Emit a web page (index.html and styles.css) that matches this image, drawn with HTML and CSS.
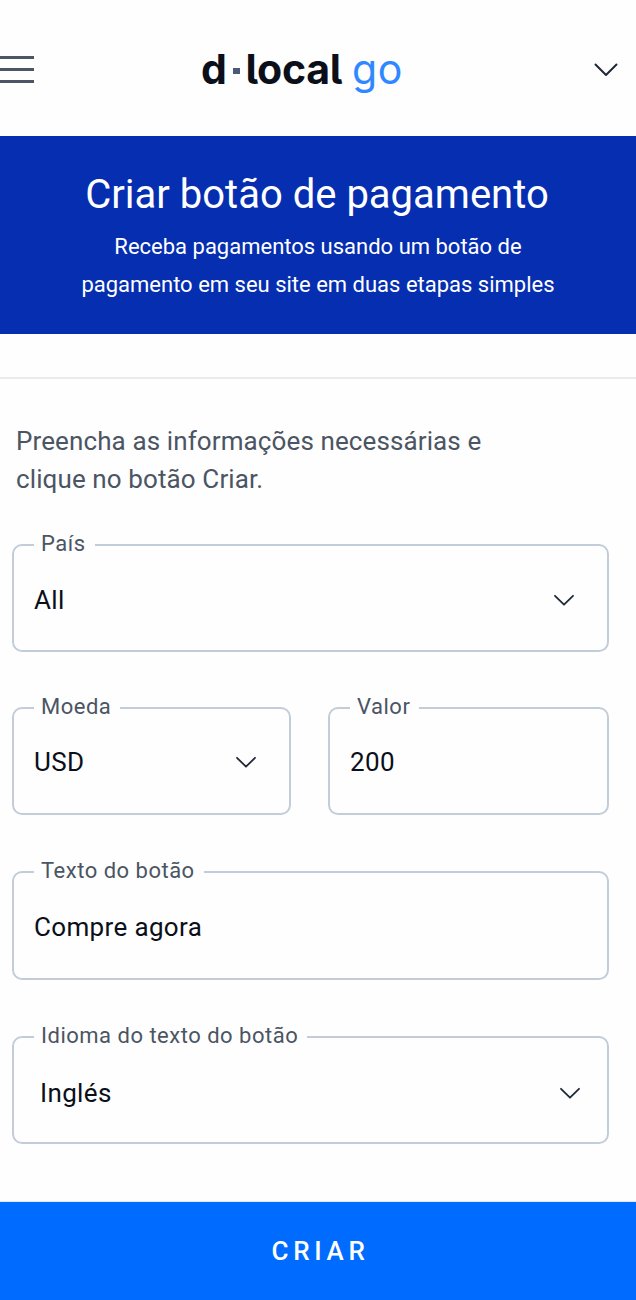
FILE: index.html
```
<!DOCTYPE html>
<html lang="pt">

<head>
    <meta charset="utf-8">
    <title>Criar botão de pagamento</title>
    <link rel="stylesheet" href="styles.css">
</head>

<body>
    <header class="topbar">
        <svg class="menu" width="34" height="28" viewBox="0 0 34 28">
            <path d="M0 1.5h34M0 13.5h34M0 25.5h34" />
        </svg>
        <div class="logo">
            <span class="logo-name">d</span><span class="logo-dot"></span><span class="logo-name">local</span><span class="logo-go">go</span>
        </div>
        <svg class="chevron chevron-big" width="24" height="14" viewBox="0 0 24 14">
            <path d="M1.5 1.5L12 12L22.5 1.5" />
        </svg>
    </header>

    <section class="banner">
        <h1>Criar botão de pagamento</h1>
        <p>Receba pagamentos usando um botão de<br>pagamento em seu site em duas etapas simples</p>
    </section>

    <form class="form">
        <p class="intro">Preencha as informações necessárias e<br>clique no botão Criar.</p>

        <fieldset class="field">
            <legend>País</legend>
            <div class="value">
                <span>All</span>
                <svg class="chevron" width="20" height="12" viewBox="0 0 20 12"><path d="M1 1.8L10 10.7L19 1.8" /></svg>
            </div>
        </fieldset>

        <div class="row">
            <fieldset class="field">
                <legend>Moeda</legend>
                <div class="value">
                    <span>USD</span>
                    <svg class="chevron" width="20" height="12" viewBox="0 0 20 12"><path d="M1 1.8L10 10.7L19 1.8" /></svg>
                </div>
            </fieldset>
            <fieldset class="field">
                <legend>Valor</legend>
                <div class="value"><span>200</span></div>
            </fieldset>
        </div>

        <fieldset class="field field-text">
            <legend>Texto do botão</legend>
            <div class="value"><span>Compre agora</span></div>
        </fieldset>

        <fieldset class="field field-lang">
            <legend>Idioma do texto do botão</legend>
            <div class="value">
                <span>Inglés</span>
                <svg class="chevron" width="20" height="12" viewBox="0 0 20 12"><path d="M1 1.8L10 10.7L19 1.8" /></svg>
            </div>
        </fieldset>
    </form>

    <button class="submit" type="button">CRIAR</button>
</body>

</html>
```

FILE: styles.css
```
:root {
    --text: #0b0f19;
    --muted: #4b5563;
    --border: #c3cdda;
    --banner: #062eb0;
    --primary: #006cff;
}

* {
    box-sizing: border-box;
}

body {
    margin: 0;
    height: 1300px;
    display: flex;
    flex-direction: column;
    background-color: #fefefe;
    color: var(--text);
    font-family: Roboto, sans-serif;
}

h1, p {
    margin: 0;
}

/* top bar */
.topbar {
    height: 136px;
    flex: none;
    display: flex;
    align-items: center;
    padding: 4px 18px 0 0;
}

.menu path {
    stroke: var(--muted);
    stroke-width: 3;
}

.logo {
    display: flex;
    align-items: baseline;
    margin: 0 auto 2px 167px;
}

.logo-name {
    font: 700 41px/50px Inter, sans-serif;
    font-feature-settings: "cv05";
    letter-spacing: -0.3px;
}

.logo-dot {
    width: 7px;
    height: 6px;
    margin: 4px 6px 0 6px;
    align-self: center;
    background-color: #4a5a78;
}

.logo-go {
    margin-left: 10px;
    color: #2f88ff;
    font: 400 41px/52px Inter, sans-serif;
    letter-spacing: 0.5px;
}

.chevron {
    flex: none;
    fill: none;
    stroke: #1f2937;
    stroke-width: 1.8;
    stroke-linecap: round;
    stroke-linejoin: round;
}

.chevron-big {
    stroke-width: 2;
}

/* banner */
.banner {
    height: 198px;
    flex: none;
    padding-top: 35px;
    background-color: var(--banner);
    color: white;
    text-align: center;
}

.banner h1 {
    padding-right: 2px;
    font-size: 40px;
    line-height: 48px;
    font-weight: 400;
}

.banner p {
    margin-top: 9px;
    font-size: 22px;
    line-height: 38px;
}

/* form */
.form {
    margin-top: 43px;
    padding: 43px 27px 0 12px;
    border-top: 2px solid #e9eaee;
    flex: 1;
}

.intro {
    margin: 0 0 33px 4px;
    color: var(--muted);
    font-size: 26px;
    line-height: 38px;
    letter-spacing: 0.11px;
}

.field {
    min-width: 0;
    height: 121px;
    margin: 0 0 42px;
    padding: 0 33px 0 20px;
    border: 2px solid var(--border);
    border-radius: 10px;
}

.field legend {
    padding: 0 9px 2px 7px;
    color: var(--muted);
    font-size: 22px;
    line-height: 26px;
    letter-spacing: 0.5px;
}

.value {
    height: 82px;
    display: flex;
    align-items: center;
    justify-content: space-between;
    font-size: 26px;
    letter-spacing: 0.35px;
}

.row {
    display: grid;
    grid-template-columns: 279px 281px;
    justify-content: space-between;
    margin-bottom: 1px;
}

.row .value {
    padding-bottom: 2px;
}

.field-text {
    height: 122px;
    margin-bottom: 43px;
}

.field-lang {
    padding: 0 27px 0 20px;
}

.field-lang .value {
    padding: 2px 0 0 6px;
}

.submit {
    height: 98px;
    flex: none;
    padding: 0 0 0 5px;
    border: 0;
    background-color: var(--primary);
    box-shadow: 0 -1px 1px #e5e7eb;
    color: white;
    font: 500 26px Roboto, sans-serif;
    letter-spacing: 4.7px;
}
```
